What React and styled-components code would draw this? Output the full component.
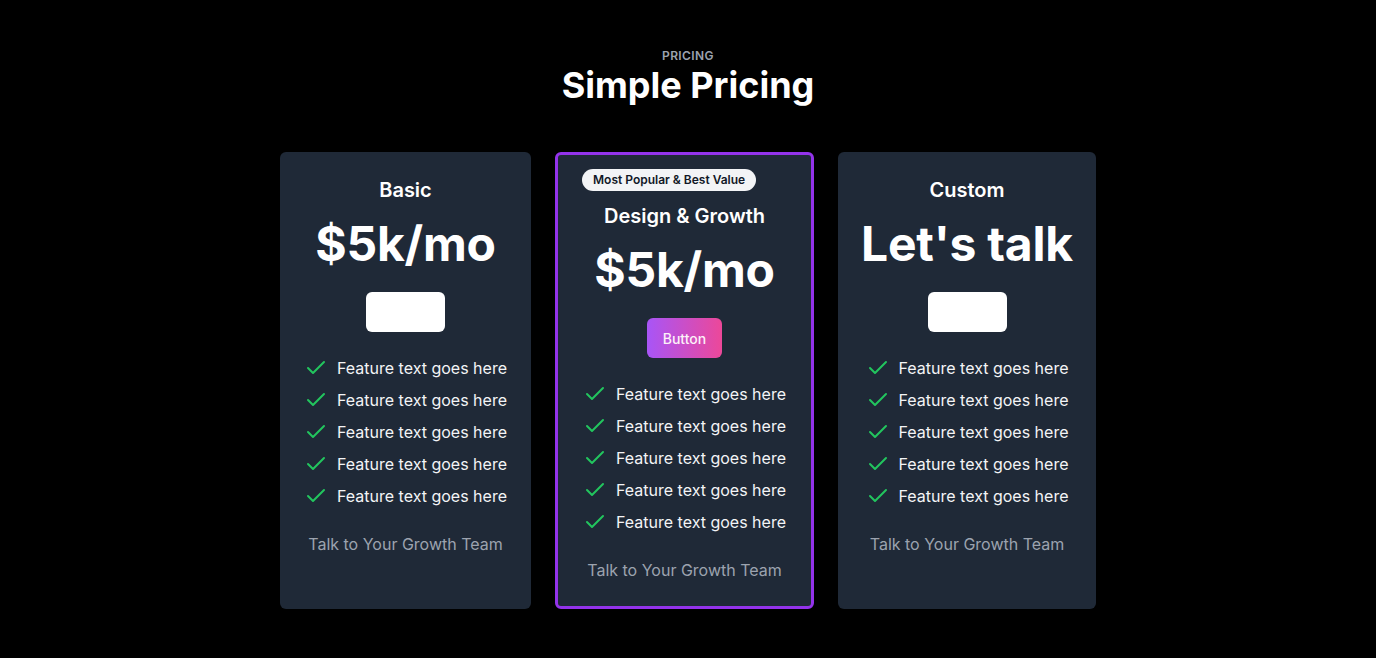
import React from "react";
import styled, { createGlobalStyle } from "styled-components";
import { Check } from "lucide-react";

const GlobalStyle = createGlobalStyle`
  html, body {
    margin: 0;
    padding: 0;
    background: #000000;
  }
  body {
    font-family: Inter, "Noto Sans", "Liberation Sans", sans-serif;
    color: #ffffff;
  }
`;

const Section = styled.section`
  min-height: 658px;
  padding-top: 47px;
  box-sizing: border-box;
  display: flex;
  flex-direction: column;
  align-items: center;
`;

const Header = styled.header`
  display: flex;
  flex-direction: column;
  align-items: center;
  gap: 1px;
  margin-bottom: 48px;
`;

const Eyebrow = styled.span`
  font-size: 12px;
  line-height: 18px;
  font-weight: 600;
  letter-spacing: 0.4px;
  color: #9ca3af;
  text-transform: uppercase;
`;

const Title = styled.h2`
  margin: 0;
  font-size: 36px;
  line-height: 38px;
  font-weight: 700;
  color: #ffffff;
`;

const CardRow = styled.div`
  display: flex;
  gap: 24px;
  align-items: stretch;
`;

const Card = styled.div`
  width: ${({ $width }) => $width}px;
  box-sizing: border-box;
  background: #1f2937;
  border-radius: 6px;
  border: ${({ $featured }) => ($featured ? "3px solid #9333ea" : "none")};
  padding: ${({ $featured }) => ($featured ? "14px 24px 24px" : "24px")};
  display: flex;
  flex-direction: column;
  align-items: center;
`;

const Badge = styled.span`
  align-self: flex-start;
  margin-bottom: 11px;
  padding: 3px 11px;
  border-radius: 999px;
  background: #f3f4f6;
  color: #111827;
  font-size: 12px;
  line-height: 16px;
  font-weight: 600;
`;

const PlanName = styled.h3`
  margin: 0;
  font-size: 20px;
  line-height: 28px;
  font-weight: 600;
`;

const Price = styled.div`
  margin-top: 16px;
  font-size: 48px;
  line-height: 48px;
  font-weight: 700;
  letter-spacing: -0.2px;
  white-space: nowrap;
`;

const ActionButton = styled.button`
  margin-top: 24px;
  height: 40px;
  min-width: ${({ $variant }) => ($variant === "gradient" ? "auto" : "79px")};
  padding: 0 16px;
  border: none;
  border-radius: 6px;
  font-family: inherit;
  font-size: 14px;
  font-weight: 500;
  color: #fdf2f8;
  background: ${({ $variant }) =>
    $variant === "gradient" ? "linear-gradient(90deg, #a855f7, #ec4899)" : "#ffffff"};
  cursor: pointer;
`;

const FeatureList = styled.ul`
  list-style: none;
  margin: 24px 0 0;
  padding: 0;
  display: flex;
  flex-direction: column;
  gap: 8px;
`;

const FeatureItem = styled.li`
  display: flex;
  align-items: center;
  gap: 9px;
  font-size: 16px;
  line-height: 24px;
  color: #f3f4f6;
  white-space: nowrap;
`;

const CheckIcon = styled(Check)`
  color: #22c55e;
  flex-shrink: 0;
`;

const Footnote = styled.p`
  margin: 24px 0 0;
  font-size: 16px;
  line-height: 24px;
  color: #9ca3af;
`;

const plans = [
  { name: "Basic", price: "$5k/mo", width: 251 },
  { name: "Design & Growth", price: "$5k/mo", width: 259, featured: true, badge: "Most Popular & Best Value" },
  { name: "Custom", price: "Let's talk", width: 258 },
];

const features = Array(5).fill("Feature text goes here");

const App = () => (
  <>
    <GlobalStyle />
    <Section>
      <Header>
        <Eyebrow>Pricing</Eyebrow>
        <Title>Simple Pricing</Title>
      </Header>
      <CardRow>
        {plans.map((plan) => (
          <Card key={plan.name} $width={plan.width} $featured={plan.featured}>
            {plan.badge && <Badge>{plan.badge}</Badge>}
            <PlanName>{plan.name}</PlanName>
            <Price>{plan.price}</Price>
            {plan.featured ? (
              <ActionButton $variant="gradient">Button</ActionButton>
            ) : (
              <ActionButton $variant="plain" aria-label="Button" />
            )}
            <FeatureList>
              {features.map((text, i) => (
                <FeatureItem key={i}>
                  <CheckIcon size={24} strokeWidth={2} />
                  {text}
                </FeatureItem>
              ))}
            </FeatureList>
            <Footnote>Talk to Your Growth Team</Footnote>
          </Card>
        ))}
      </CardRow>
    </Section>
  </>
);

export default App;
